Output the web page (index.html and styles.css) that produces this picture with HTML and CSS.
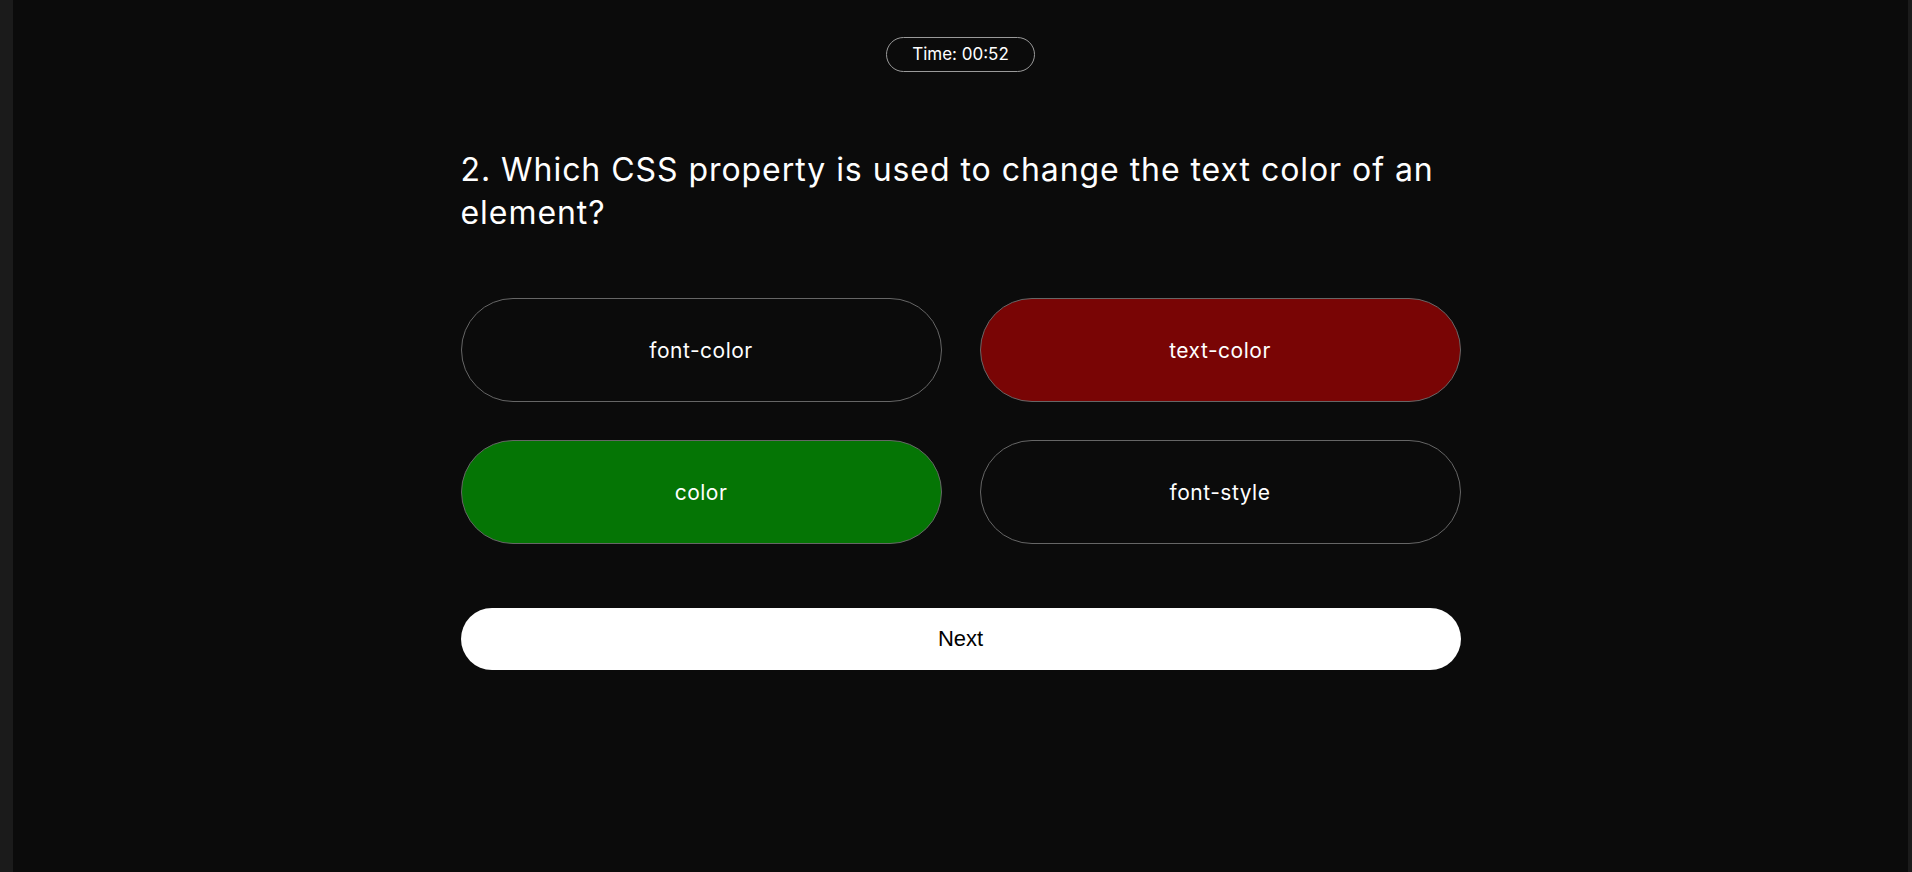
FILE: index.html
```html
<!DOCTYPE html>
<html lang="en">
<head>
<meta charset="utf-8">
<title>Quiz</title>
<link rel="stylesheet" href="styles.css">
</head>
<body>
<div class="frame">
  <div class="edge-left"></div>
  <main class="main">
    <div class="timer">Time: 00:52</div>
    <section class="quiz">
      <h1 class="question">2. Which CSS property is used to change the text color of an element?</h1>
      <div class="options">
        <button class="option">font-color</button>
        <button class="option wrong">text-color</button>
        <button class="option right">color</button>
        <button class="option">font-style</button>
      </div>
      <button class="next">Next</button>
    </section>
  </main>
  <div class="edge-right"></div>
</div>
</body>
</html>
```

FILE: styles.css
```css
* { box-sizing: border-box; }
html, body { margin: 0; padding: 0; height: 100%; }
body {
  background: #0b0b0b;
  color: #ffffff;
  font-family: Inter, "Noto Sans", sans-serif;
}
.frame {
  display: flex;
  min-height: 100vh;
}
.edge-left {
  width: 13px;
  background: #1b1b1b;
  flex: none;
}
.edge-right {
  width: 4px;
  background: #1b1b1b;
  flex: none;
}
.main {
  flex: 1;
  background: #0b0b0b;
  display: flex;
  flex-direction: column;
  align-items: center;
  padding-top: 37px;
}
.timer {
  height: 35px;
  padding: 0 25px;
  border: 1px solid #9a9a9a;
  border-radius: 18px;
  font-size: 17px;
  line-height: 33px;
  color: #ffffff;
}
.quiz {
  width: 1000px;
  margin-top: 76px;
}
.question {
  margin: 0;
  font-size: 32px;
  font-weight: 400;
  line-height: 43px;
  letter-spacing: 0.95px;
}
.options {
  margin-top: 64px;
  display: grid;
  grid-template-columns: 1fr 1fr;
  gap: 38px;
}
.option {
  height: 104px;
  border: 1px solid #666666;
  border-radius: 52px;
  background: #0b0b0b;
  color: #ffffff;
  font-family: Inter, "Noto Sans", sans-serif;
  font-size: 21px;
  letter-spacing: 0.5px;
  cursor: pointer;
}
.option.wrong { background: #790505; }
.option.right { background: #057505; }
.next {
  display: block;
  width: 100%;
  height: 62px;
  margin-top: 64px;
  border: none;
  border-radius: 31px;
  background: #ffffff;
  color: #000000;
  font-family: "Liberation Sans", Arial, sans-serif;
  font-size: 22px;
  cursor: pointer;
}
```
